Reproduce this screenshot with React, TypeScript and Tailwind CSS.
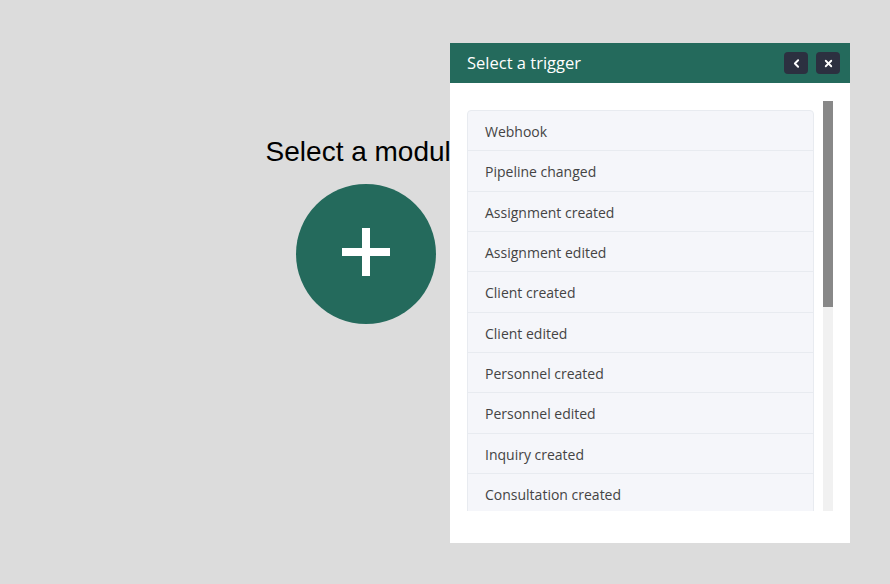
import { ChevronLeft, X } from "lucide-react";

const triggers = [
  "Webhook",
  "Pipeline changed",
  "Assignment created",
  "Assignment edited",
  "Client created",
  "Client edited",
  "Personnel created",
  "Personnel edited",
  "Inquiry created",
  "Consultation created",
  "Consultation edited",
  "Invoice created",
];

export default function App() {
  return (
    <div className="relative w-[890px] h-[584px] bg-[#dcdcdc] overflow-hidden">
      {/* module picker */}
      <div className="w-[732px] pt-[136px] flex flex-col items-center">
        <h1 className="text-[28px] leading-[32px] text-black font-['Liberation_Sans',Arial,sans-serif]">
          Select a module
        </h1>
        <button className="mt-[16px] w-[140px] h-[140px] rounded-full bg-[#246a5c] flex items-center justify-center">
          <svg width="48" height="48" viewBox="0 0 48 48" className="-mt-[4px]">
            <rect x="20" y="0" width="8" height="48" fill="#fff" />
            <rect x="0" y="20" width="48" height="8" fill="#fff" />
          </svg>
        </button>
      </div>

      {/* trigger panel */}
      <div className="absolute left-[450px] top-[43px] w-[400px] h-[500px] bg-white flex flex-col font-['Open_Sans',sans-serif]">
        <div className="h-[40px] bg-[#246a5c] flex items-center pl-[17px] pr-[10px]">
          <span className="text-white text-[16.5px] font-medium pt-[1px]">Select a trigger</span>
          <div className="ml-auto flex gap-[8px]">
            <button className="w-[24px] h-[22px] rounded-[4px] bg-[#2c3040] flex items-center justify-center text-white">
              <ChevronLeft size={13} strokeWidth={3.5} />
            </button>
            <button className="w-[24px] h-[22px] rounded-[4px] bg-[#2c3040] flex items-center justify-center text-white">
              <X size={11} strokeWidth={4} />
            </button>
          </div>
        </div>

        <div className="flex pl-[17px] pr-[17px] pt-[18px] h-[428px]">
          <div className="w-[347px] h-[410px] overflow-hidden pt-[9px]">
            <ul className="border border-[#e8ebf0] rounded-t-[4px] bg-[#f5f6fa]">
              {triggers.map((t) => (
                <li
                  key={t}
                  className="h-[40.33px] flex items-center pt-[2px] px-[17px] border-b border-[#e8ebf0] text-[14px] text-[#444]"
                >
                  {t}
                </li>
              ))}
            </ul>
          </div>
          <div className="ml-[9px] w-[10px] h-[410px] bg-[#f1f1f1]">
            <div className="h-[206px] bg-[#888888]" />
          </div>
        </div>
      </div>
    </div>
  );
}
